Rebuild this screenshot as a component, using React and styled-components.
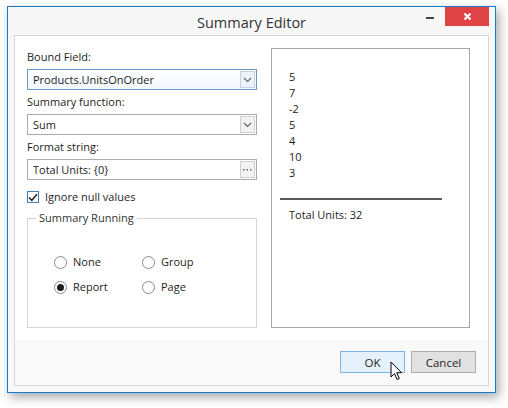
import React from 'react'
import styled, { createGlobalStyle } from 'styled-components'

const GlobalStyle = createGlobalStyle`
  html, body {
    margin: 0;
    padding: 0;
    background: #fff;
  }
  body {
    font-family: "Segoe UI", "Open Sans", "Liberation Sans", sans-serif;
    font-size: 11px;
    color: #1e1e1e;
  }
`

const Page = styled.div`
  width: 508px;
  height: 408px;
  padding: 6px 0 0 7px;
  box-sizing: border-box;
  position: relative;
`

const Window = styled.div`
  position: relative;
  width: 489px;
  height: 387px;
  box-sizing: border-box;
  border: 1px solid #1979ca;
  background: #f7f7f7;
  box-shadow: 3px 4px 10px rgba(0, 0, 0, 0.35);
  display: flex;
  flex-direction: column;
`

const TitleBar = styled.div`
  height: 28px;
  display: flex;
  align-items: center;
  justify-content: center;
  padding-top: 2px;
  box-sizing: border-box;
  font-size: 14.5px;
  color: #333;
`

const TitleButtons = styled.div`
  position: absolute;
  top: 0;
  right: 6px;
  display: flex;
  align-items: flex-start;
`

const MinButton = styled.div`
  width: 30px;
  height: 19px;
  display: flex;
  align-items: center;
  justify-content: center;
  &::after {
    content: '';
    width: 8px;
    height: 2px;
    background: #444;
    margin-top: 3px;
  }
`

const CloseButton = styled.div`
  width: 44px;
  height: 19px;
  background: #e04343;
  display: flex;
  align-items: center;
  justify-content: center;
`

const Frame = styled.div`
  flex: 1;
  margin: 0 6px 6px 6px;
  border: 1px solid #d6d6d6;
  display: flex;
  flex-direction: column;
  background: #fff;
`

const Body = styled.div`
  flex: 1;
  display: flex;
  align-items: flex-start;
  gap: 14px;
  padding: 12px 12px 12px 12px;
`

const LeftColumn = styled.div`
  width: 230px;
  display: flex;
  flex-direction: column;
  padding-top: 1px;
`

const Label = styled.div`
  line-height: 16px;
  margin-top: ${p => p.$top || 0}px;
  margin-bottom: 4px;
`

const Combo = styled.div`
  height: 21px;
  box-sizing: border-box;
  border: 1px solid ${p => (p.$focused ? '#7096c6' : '#acacac')};
  background: ${p => (p.$focused ? 'linear-gradient(#fdfeff, #f3f7fc)' : '#fff')};
  display: flex;
  align-items: center;
  padding: 0 1px 0 5px;
`

const ComboText = styled.span`
  flex: 1;
  line-height: 16px;
`

const SideButton = styled.div`
  width: 15px;
  height: 17px;
  box-sizing: border-box;
  border: 1px solid ${p => (p.$focused ? '#c3d2e6' : '#d0d0d0')};
  background: ${p => (p.$focused ? '#eef3f9' : '#f2f2f2')};
  display: flex;
  align-items: center;
  justify-content: center;
  color: #666;
`

const CheckRow = styled.label`
  display: flex;
  align-items: center;
  gap: 6px;
  margin-top: 9px;
  line-height: 16px;
`

const CheckBox = styled.span`
  width: 12px;
  height: 12px;
  box-sizing: border-box;
  border: 1px solid #3c7fb1;
  background: #fff;
  display: flex;
  align-items: center;
  justify-content: center;
`

const GroupBox = styled.fieldset`
  margin: 5px 0 0 0;
  padding: 0;
  height: 118px;
  box-sizing: border-box;
  border: 1px solid #d5d5d5;
  min-width: 0;
`

const Legend = styled.legend`
  padding: 0 3px;
  margin-left: 8px;
  line-height: 16px;
  color: #333;
`

const RadioGrid = styled.div`
  display: grid;
  grid-template-columns: 88px 88px;
  row-gap: 9px;
  padding: 28px 0 0 26px;
`

const RadioItem = styled.label`
  display: flex;
  align-items: center;
  gap: 6px;
  line-height: 16px;
`

const RadioCircle = styled.span`
  width: 13px;
  height: 13px;
  box-sizing: border-box;
  border-radius: 50%;
  border: 1px solid #8a8a8a;
  background: #fff;
  display: flex;
  align-items: center;
  justify-content: center;
  &::after {
    content: '';
    display: ${p => (p.$checked ? 'block' : 'none')};
    width: 7px;
    height: 7px;
    border-radius: 50%;
    background: #1e1e1e;
  }
`

const Preview = styled.div`
  width: 199px;
  height: 280px;
  box-sizing: border-box;
  border: 1px solid #a8a8a8;
  padding: 20px 0 0 8px;
`

const Values = styled.div`
  padding-left: 9px;
  line-height: 16px;
`

const Rule = styled.div`
  width: 162px;
  height: 0;
  border-top: 2px solid #5a5a5a;
  margin: 17px 0 7px 0;
`

const Footer = styled.div`
  height: 45px;
  background: #f9f9f9;
  display: flex;
  justify-content: flex-end;
  align-items: flex-start;
  gap: 6px;
  padding: 11px 12px 0 0;
  box-sizing: border-box;
`

const Button = styled.button`
  width: 65px;
  height: 22px;
  box-sizing: border-box;
  font: inherit;
  font-size: 11.5px;
  color: #1e1e1e;
  border: 1px solid ${p => (p.$default ? '#7eb4ea' : '#adadad')};
  background: ${p => (p.$default ? '#e5f1fb' : '#e1e1e1')};
  padding: 0;
`

const Cursor = styled.svg`
  position: absolute;
  left: 390px;
  top: 361px;
`

const Chevron = () => (
  <svg width="9" height="6" viewBox="0 0 9 6">
    <path d="M1 1 L4.5 4.5 L8 1" fill="none" stroke="#666" strokeWidth="1.2" />
  </svg>
)

const values = [5, 7, -2, 5, 4, 10, 3]

const App = () => (
  <Page>
    <GlobalStyle />
    <Window>
      <TitleBar>Summary Editor</TitleBar>
      <TitleButtons>
        <MinButton />
        <CloseButton>
          <svg width="9" height="9" viewBox="0 0 9 9">
            <path d="M1.5 1.5 L7.5 7.5 M7.5 1.5 L1.5 7.5" stroke="#fff" strokeWidth="2.2" />
          </svg>
        </CloseButton>
      </TitleButtons>
      <Frame>
        <Body>
          <LeftColumn>
            <Label>Bound Field:</Label>
            <Combo $focused>
              <ComboText>Products.UnitsOnOrder</ComboText>
              <SideButton $focused><Chevron /></SideButton>
            </Combo>
            <Label $top={4}>Summary function:</Label>
            <Combo>
              <ComboText>Sum</ComboText>
              <SideButton><Chevron /></SideButton>
            </Combo>
            <Label $top={4}>Format string:</Label>
            <Combo>
              <ComboText>Total Units: {'{0}'}</ComboText>
              <SideButton>
                <svg width="9" height="3" viewBox="0 0 9 3">
                  <rect x="0" y="1" width="1.5" height="1.5" fill="#666" />
                  <rect x="3.5" y="1" width="1.5" height="1.5" fill="#666" />
                  <rect x="7" y="1" width="1.5" height="1.5" fill="#666" />
                </svg>
              </SideButton>
            </Combo>
            <CheckRow>
              <CheckBox>
                <svg width="10" height="9" viewBox="0 0 10 9">
                  <path d="M1 4.5 L3.8 7.3 L9 1.2" fill="none" stroke="#222" strokeWidth="1.5" />
                </svg>
              </CheckBox>
              Ignore null values
            </CheckRow>
            <GroupBox>
              <Legend>Summary Running</Legend>
              <RadioGrid>
                <RadioItem><RadioCircle />None</RadioItem>
                <RadioItem><RadioCircle />Group</RadioItem>
                <RadioItem><RadioCircle $checked />Report</RadioItem>
                <RadioItem><RadioCircle />Page</RadioItem>
              </RadioGrid>
            </GroupBox>
          </LeftColumn>
          <Preview>
            <Values>
              {values.map((v, i) => <div key={i}>{v}</div>)}
            </Values>
            <Rule />
            <Values>Total Units: 32</Values>
          </Preview>
        </Body>
        <Footer>
          <Button $default>OK</Button>
          <Button>Cancel</Button>
        </Footer>
      </Frame>
    </Window>
    <Cursor width="13" height="21" viewBox="0 0 13 21">
      <path d="M1 1 L1 16 L4.5 12.5 L7 18.5 L9.3 17.5 L6.8 11.7 L11.5 11.7 Z" fill="#fff" stroke="#000" strokeWidth="1" strokeLinejoin="round" />
    </Cursor>
  </Page>
)

export default App
